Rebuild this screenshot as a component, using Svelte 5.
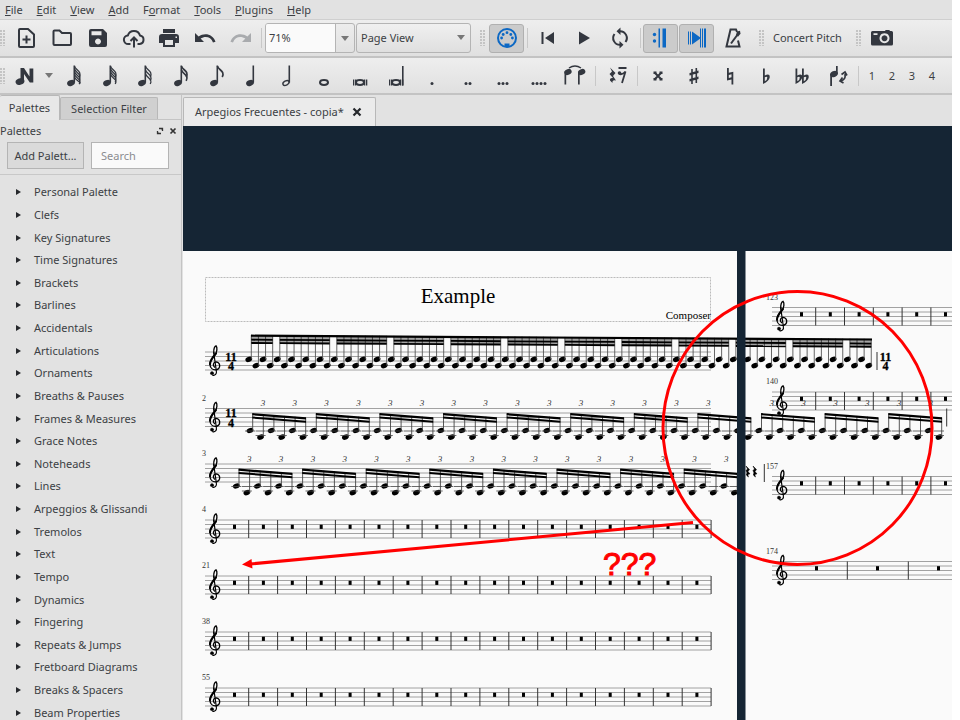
<script>
  const menus = ['File', 'Edit', 'View', 'Add', 'Format', 'Tools', 'Plugins', 'Help'];
  const accessKey = { Format: 1 };
  const palettes = [
    'Personal Palette', 'Clefs', 'Key Signatures', 'Time Signatures', 'Brackets', 'Barlines',
    'Accidentals', 'Articulations', 'Ornaments', 'Breaths & Pauses', 'Frames & Measures',
    'Grace Notes', 'Noteheads', 'Lines', 'Arpeggios & Glissandi', 'Tremolos', 'Text', 'Tempo',
    'Dynamics', 'Fingering', 'Repeats & Jumps', 'Fretboard Diagrams', 'Breaks & Spacers', 'Beam Properties'
  ];
  const fileTools = ['New', 'Open', 'Save', 'Save online', 'Print', 'Undo', 'Redo'];
  const durations = ['128th', '64th', '32nd', '16th', 'Eighth', 'Quarter', 'Half', 'Whole', 'Breve', 'Longa',
    'Dot', 'Double dot', 'Triple dot', 'Quadruple dot', 'Tie'];
  const accidentals = ['Double sharp', 'Sharp', 'Natural', 'Flat', 'Double flat', 'Flip'];
  const flagCount = [5, 4, 3, 2, 1];

  const range = (n) => Array.from({ length: n }, (_, i) => i);

  // Score geometry, in canvas units
  const gap = 4.5;
  const staves = [
    { n: '', x: 205, y: 352, end: 711 },
    { n: '2', x: 205, y: 408.5, end: 711 },
    { n: '3', x: 205, y: 464, end: 711 },
    { n: '4', x: 205, y: 520, end: 711, first: 248.7, step: 28.9, bars: 17 },
    { n: '21', x: 205, y: 576, end: 711, first: 248.7, step: 28.9, bars: 17 },
    { n: '38', x: 205, y: 632, end: 711, first: 248.7, step: 28.9, bars: 17 },
    { n: '55', x: 205, y: 688, end: 711, first: 248.7, step: 28.9, bars: 17 },
    { n: '123', x: 772, y: 307.5, end: 1200, first: 815.7, step: 28.8, bars: 13 },
    { n: '140', x: 772, y: 392, end: 1200, first: 815.7, step: 28.8, bars: 13 },
    { n: '157', x: 772, y: 476.5, end: 1200, first: 815.7, step: 28.8, bars: 13 },
    { n: '174', x: 772, y: 561.5, end: 1200, first: 847.3, step: 61, bars: 6 }
  ];
  const runPitch = 7.126;
  const runStem = (i) => 251.3 + runPitch * i;
  const runTop = (x) => 335 + (x - 251) * 0.0062;
  const runGroups = [[0, 3], ...range(10).map((k) => [4 + 8 * k, 11 + 8 * k]), [84, 87]];
  const beam = (x1, y1, x2, y2, t) => `M${x1} ${y1}L${x2} ${y2}V${y2 + t}L${x1} ${y1 + t}Z`;
  const tripletRows = [
    { x: 250, y: 408.5, groups: 11 },
    { x: 236.3, y: 464, groups: 8 }
  ];
  const step = 10.6;
</script>

{#snippet grip()}<span class="grip"></span>{/snippet}
{#snippet sep()}<span class="sep"></span>{/snippet}

<div class="app">
  <nav class="menubar">
    {#each menus as m}
      {@const k = accessKey[m] ?? 0}
      <button>{m.slice(0, k)}<u>{m[k]}</u>{m.slice(k + 1)}</button>
    {/each}
  </nav>

  <div class="toolbar">
    {@render grip()}
    <div class="group files">
      {#each fileTools as t, i}
        <button aria-label={t} class:dim={i === 6}>
          <svg width="24" height="24" viewBox="0 0 24 24">
            {#if i === 0}
              <path d="M5 4q0-1 1-1h8l6 5.500v11.500q0 1-1 1H6q-1 0-1-1zM12.500 9.500v8M8.500 13.500h8" class="line" />
            {:else if i === 1}
              <path d="M3.500 5.500q0-1 1-1h5l2.500 2.500h8q1 0 1 1v10q0 1-1 1h-15.500q-1 0-1-1z" class="line" />
            {:else if i === 2}
              <path fill-rule="evenodd" d="M5 3h12l4 4v12q0 2-2 2H5q-2 0-2-2V5q0-2 2-2zM5.500 5.300v4h10v-4zM12 12.500a3 3 0 1 0 .01 0z" />
            {:else if i === 3}
              <path d="M8.500 18H6.500a4.300 4.300 0 0 1-.6-8.600A6.300 6.300 0 0 1 18 9.500 4.300 4.300 0 0 1 17.700 18h-2.200M12 21.500V12M8.500 15l3.500-3.500 3.500 3.500" class="line" />
            {:else if i === 4}
              <path fill-rule="evenodd" d="M6 3h12v4H6zM5 8h14q3 0 3 3v6h-4v4H6v-4H2v-6q0-3 3-3zM8 14v5h8v-5zM18.500 10.500v1.500h1.500v-1.500z" />
            {:else if i === 5}
              <path d="M2 7v9h9l-3.400-3.400C12 9.500 18 10.500 20 16.500l2.500-.8C20 8 11.500 6 5.600 10.600z" />
            {:else}
              <path d="M22 7v9h-9l3.400-3.400C12 9.500 6 10.500 4 16.500l-2.500-.8C4 8 12.500 6 18.400 10.600z" />
            {/if}
          </svg>
        </button>
      {/each}
    </div>
    {@render sep()}
    <div class="zoom">
      <input aria-label="Zoom" value="71%" />
      <button aria-label="Zoom levels"><i class="caret"></i></button>
    </div>
    <div class="view">
      <select aria-label="View mode"><option>Page View</option></select>
      <i class="caret"></i>
    </div>
    <span class="grip inset"></span>
    <button class="toggle" aria-label="MIDI input" aria-pressed="true">
      <svg width="22" height="22" viewBox="0 0 22 22">
        <circle cx="11" cy="11" r="9" fill="none" stroke="#0c68c4" stroke-width="2" />
        <path d="M8.500 20v-3.500h5V20z" />
        <circle cx="5.600" cy="11" r="1.400" /><circle cx="16.400" cy="11" r="1.400" />
        <circle cx="7.200" cy="7.500" r="1.400" /><circle cx="14.800" cy="7.500" r="1.400" /><circle cx="11" cy="5.700" r="1.400" />
      </svg>
    </button>
    {@render sep()}
    <div class="group play">
      <button aria-label="Rewind"><svg width="24" height="24" viewBox="0 0 24 24"><path d="M5.500 6h2v12h-2zM18 6v12l-9-6z" /></svg></button>
      <button aria-label="Play"><svg width="24" height="24" viewBox="0 0 24 24"><path d="M7 5.500v13L18 12z" /></svg></button>
      <button aria-label="Loop">
        <svg width="24" height="24" viewBox="0 0 24 24">
          <path d="M12 5.200a6.800 6.800 0 0 1 5.500 10.800M12 18.800A6.800 6.800 0 0 1 6.500 8" class="line" />
          <path d="M12.500 1.500v7.500L8.500 5.200zM11.500 15v7.500l4-3.700z" />
        </svg>
      </button>
    </div>
    {@render sep()}
    <div class="pair">
      <button class="toggle" aria-label="Play repeats" aria-pressed="true">
        <svg width="22" height="22" viewBox="0 0 22 22"><circle cx="4.500" cy="7.500" r="1.700" /><circle cx="4.500" cy="14" r="1.700" /><path d="M8.500 1.500h1.500v19H8.500zM12.500 1.500h3.500v19h-3.500z" /></svg>
      </button>
      <button class="toggle" aria-label="Pan score" aria-pressed="true">
        <svg width="22" height="22" viewBox="0 0 22 22"><path d="M2 4.500h1v13H2zM4 4.500h1v13H4zM6 4.500l9 6.500-9 6.500zM14 1.500h1v19h-1zM16 1.500h1v19h-1zM18 1.500h2v19h-2z" /></svg>
      </button>
    </div>
    <button class="tool" aria-label="Metronome">
      <svg width="24" height="24" viewBox="0 0 24 24">
        <path d="M16 6l-1-2.500H9.500L5.500 20.500h13l-1.500-6" class="line" /><path d="M10 17.500L17 8" class="line" /><path d="M15 9l1-3.500 3-.8.5 3-2.500 3z" />
      </svg>
    </button>
    {@render grip()}
    <button class="pitch">Concert Pitch</button>
    {@render grip()}
    <button class="tool shot" aria-label="Image capture">
      <svg width="24" height="24" viewBox="0 0 24 24">
        <path fill-rule="evenodd" d="M2.500 5H15l.7-1h3.600l.7 1h1.500q1.500 0 1.500 1.500V18q0 1.500-1.500 1.500h-19Q1 19.500 1 18V6.500Q1 5 2.500 5zM14.500 7.200a5 5 0 1 0 .01 0zM14.500 9.200a3 3 0 1 1-.01 0zM3.500 7.300v1.700h4v-1.700z" />
      </svg>
    </button>
  </div>

  <div class="toolbar notes">
    {@render grip()}
    <button class="tool entry" aria-label="Note input">
      <svg width="20" height="20" viewBox="0 0 20 20"><ellipse cx="5" cy="15.500" rx="4.500" ry="3.300" transform="rotate(-20 5 15.500)" /><path d="M5.500 2h3.500l5.500 8.500V2.500h3.800v14h-3.500L9 8v7.500H5.500z" /></svg>
    </button>
    <button class="drop" aria-label="Input modes"><i class="caret"></i></button>
    <div class="group durations">
      {#each durations as d, i}
        <button aria-label={d}>
          <svg width="24" height="24" viewBox="0 0 24 24">
            {#if i < 7}
              {#if i === 6}
                <ellipse cx="9" cy="19" rx="3.300" ry="2.100" transform="rotate(-28 9 19)" fill="none" stroke="#33373f" stroke-width="1.400" />
              {:else}
                <ellipse cx="9" cy="19" rx="4" ry="2.900" transform="rotate(-22 9 19)" />
              {/if}
              <path d="M11.500 1.500h1.600v17h-1.600z" />
              {#if i < 5}
                {#each range(flagCount[i]) as f}
                  {@const y = 2 + f * (i < 2 ? 2.700 : 3.800)}
                  <path d="M12.500 {y}C13 {y + 4} 20.500 {y + 5} 17.200 {y + 11 > 20 ? 20 : y + 11}" fill="none" stroke="#33373f" stroke-width={i > 2 ? 1.7 : 1.3} />
                {/each}
              {/if}
            {:else if i < 10}
              <ellipse cx="12" cy="18.500" rx="4" ry="2.400" fill="none" stroke="#33373f" stroke-width="2" />
              {#if i > 7}<path d="M5 15.500h1.300v6H5zM7 15.500h1.300v6H7zM16 15.500h1.300v6H16zM18 15.500h1.300v6H18z" />{/if}
              {#if i === 9}<path d="M18 2h1.600v19.500h-1.600z" />{/if}
            {:else if i < 14}
              {#each range(i - 9) as k}
                <circle cx={12 + (k - (i - 10) / 2) * 4} cy="19.500" r="1.500" />
              {/each}
            {:else}
              <path d="M1.500 7v13.500h1.700V10zM15 7v13.500h1.700V10z" />
              <ellipse cx="5" cy="8" rx="3.800" ry="2.800" transform="rotate(-25 5 8)" /><ellipse cx="18.700" cy="8" rx="3.800" ry="2.800" transform="rotate(-25 18.700 8)" />
              <path d="M6 4q6-4 12 0" fill="none" stroke="#33373f" stroke-width="1.500" />
            {/if}
          </svg>
        </button>
      {/each}
    </div>
    {@render sep()}
    <button class="tool rest" aria-label="Rest">
      <svg width="24" height="24" viewBox="0 0 24 24">
        <path d="M5 3.500l5.500 5.500-2.500 3 3 4.500q-4-1-3.500 2.500L5 16.500q-.5-3 3-2.500L4.500 10l2.500-2.500z" />
        <path d="M13.500 3h8v2h-8z" /><circle cx="14.500" cy="9" r="1.800" /><path d="M14 10q4 1 6.500-2.500L17 19" fill="none" stroke="#33373f" stroke-width="1.800" />
      </svg>
    </button>
    {@render sep()}
    <div class="group accs">
      {#each accidentals as a, i}
        <button aria-label={a}>
          <svg width="24" height="24" viewBox="0 0 24 24">
            {#if i === 0}
              <path d="M8.500 8.500l7 7M15.500 8.500l-7 7" class="line" /><path d="M7.500 7.500h3v2.500h-3zM13.500 7.500h3v2.500h-3zM7.500 14h3v2.500h-3zM13.500 14h3v2.500h-3z" />
            {:else if i === 1}
              <path d="M9.200 5h1.600v15H9.200zM13.500 4h1.600v15h-1.600zM7.500 9l9-2.500V9l-9 2.500zM7.500 15l9-2.500V15l-9 2.500z" />
            {:else if i === 2}
              <path fill-rule="evenodd" d="M9 4h1.800v4.800l4.500-1v12.700h-1.800v-5L9 16.500zM10.800 11v3l2.700-.7v-3z" />
            {:else if i === 3}
              <path fill-rule="evenodd" d="M9 4.500h1.800v7q5-2.500 5 1.500-.5 4-6.800 7zM10.800 13.200v4q2.700-1.500 2.500-3.700-.3-1.300-2.500-.3z" />
            {:else if i === 4}
              {#each [5.5, 12] as x}
                <path transform="translate({x - 9} 0)" fill-rule="evenodd" d="M9 4.500h1.800v7q5-2.500 5 1.500-.5 4-6.800 7zM10.800 13.200v4q2.700-1.500 2.500-3.700-.3-1.300-2.500-.3z" />
              {/each}
            {:else}
              <ellipse cx="8" cy="10" rx="4" ry="3" transform="rotate(-25 8 10)" /><path d="M4.200 10H6v12H4.200zM10 2h1.700v8H10z" />
              <path d="M14.500 17q5.500-1 4.500-7M16.500 13.500L14 17l3.500 2M15.500 10.500l3.500-2.500 2 3.500" fill="none" stroke="#33373f" stroke-width="1.700" />
            {/if}
          </svg>
        </button>
      {/each}
    </div>
    {@render sep()}
    <div class="voices">
      {#each [1, 2, 3, 4] as v}<button>{v}</button>{/each}
    </div>
  </div>

  <div class="body">
    <aside>
      <div class="sidetabs">
        <button class="on">Palettes</button>
        <button>Selection Filter</button>
      </div>
      <header>
        <span>Palettes</span>
        <button aria-label="Float"><svg width="8" height="8" viewBox="0 0 8 8"><path d="M3 1.500H6.500V4M5 6.500H1.500V4M6.500 1.500L5.500 2.500M1.500 6.500l1-1" fill="none" stroke="#333" stroke-width="1.300" /></svg></button>
        <button aria-label="Close palettes"><svg width="8" height="8" viewBox="0 0 8 8"><path d="M1.500 1.500l5 5M6.500 1.500l-5 5" fill="none" stroke="#333" stroke-width="1.700" /></svg></button>
      </header>
      <div class="search">
        <button>Add Palett...</button>
        <input placeholder="Search" aria-label="Search palettes" />
      </div>
      <ul>
        {#each palettes as p}
          <li><button><i></i>{p}</button></li>
        {/each}
      </ul>
    </aside>

    <main>
      <div class="doctabs">
        <div class="doctab">
          <span>Arpegios Frecuentes - copia*</span>
          <button aria-label="Close score"><svg width="10" height="10" viewBox="0 0 10 10"><path d="M1.500 1.500l7 7M8.500 1.500l-7 7" fill="none" stroke="#26282c" stroke-width="2.200" /></svg></button>
        </div>
      </div>
      <div class="canvas">
        <svg class="score" width="1017" height="594" viewBox="183 126 1017 594">
          <defs>
            <g id="clef">
              <g transform="scale(.3333)" fill="none" stroke="#000" stroke-linecap="round">
                <path d="M15 24C12 10 18 2 21 1C26 6 24 20 18 28C10 38 3 45 3 56C3 67 11 73 19 73C28 73 33 67 32 59C31 52 24 48 19 50C12 52 11 60 17 65" stroke-width="4" />
                <path d="M21 24C10 36 3 45 3 56" stroke-width="6" />
                <path d="M14 20L22 76C24 85 18 91 11 89" stroke-width="3.500" />
                <circle cx="9" cy="83" r="5" fill="#000" />
              </g>
            </g>
            <ellipse id="head" rx="3.500" ry="2.500" transform="rotate(-22)" />
          </defs>

          <rect x="183" y="251" width="554" height="600" fill="#fafafa" />
          <rect x="745" y="251" width="554" height="600" fill="#fafafa" />

          <rect x="205.500" y="277.500" width="505" height="44" fill="none" stroke="#bbb" stroke-dasharray="2 1" />
          <text x="458" y="303" font-size="21" text-anchor="middle">Example</text>
          <text x="711" y="319" font-size="11" text-anchor="end">Composer</text>

          {#each staves as s}
            {#each range(5) as l}
              <path d="M{s.x} {s.y + l * gap}H{s.end}" stroke="#8c8c8c" stroke-width=".8" />
            {/each}
            <use href="#clef" x={s.x + 4} y={s.y - 6.5} />
            <text x={s.x - (s.x > 700 ? 6 : 3)} y={s.y - 8} font-size="8" fill="#333">{s.n}</text>
            {#each range(s.bars ?? 0) as b}
              {@const x = s.first + b * s.step}
              <path d="M{x} {s.y}v18" stroke="#333" stroke-width="1" />
              <rect x={x - (s.step > 40 ? 32.3 : 15.7)} y={s.y + 4.700} width="3" height="4.200" />
            {/each}
          {/each}

          {#each [[231, 352], [231, 408.5], [885.5, 352]] as [x, y]}
            <g font-size="12" font-weight="700" text-anchor="middle" stroke="#000" stroke-width=".3">
              <text {x} y={y + 8.500}>11</text>
              <text {x} y={y + 18}>4</text>
            </g>
          {/each}

          {#each range(88) as i}
            {@const x = runStem(i)}
            {@const y = i % 2 ? 365.6 : 359.4}
            <use href="#head" x={x - 2.500} {y} />
            <path d="M{x} {y}V{runTop(x)}" stroke="#555" stroke-width=".9" />
          {/each}
          <path d={beam(251, 334.6, 872, 338.4, 2.2)} />
          {#each runGroups as [a, b]}
            {@const x1 = runStem(a)}
            {@const x2 = runStem(b)}
            <path d={beam(x1, runTop(x1), x2, runTop(x2), 8)} fill="#000" opacity=".35" />
            <path d={beam(x1, runTop(x1) + 3.8, x2, runTop(x2) + 3.8, 1.8)} />
            <path d={beam(x1, runTop(x1) + 7, x2, runTop(x2) + 7, 1.9)} />
          {/each}

          {#each tripletRows as r}
            {#each range(r.groups) as g}
              {@const x0 = r.x + g * 6 * step}
              {#each range(6) as k}
                {@const x = x0 + k * step}
                {@const y = r.y + (k % 2 ? 28.600 : 22)}
                <use href="#head" {x} {y} />
                <path d="M{x + 2.700} {y}V{r.y + 5 + k * 0.8}" stroke="#444" stroke-width=".9" />
                <path d="M{x - 5} {r.y + 22.500}h10" stroke="#444" stroke-width=".8" />
                {#if k % 2}<path d="M{x - 5} {r.y + 27}h10" stroke="#444" stroke-width=".8" />{/if}
              {/each}
              <path d={beam(x0 + 2.3, r.y + 4.6, x0 + 56, r.y + 8.8, 2.2)} />
              <path d={beam(x0 + 2.3, r.y + 8, x0 + 56, r.y + 12.2, 2)} />
              <text x={x0 + 13} y={r.y - 2.500} class="tuplet">3</text>
              <text x={x0 + 44.800} y={r.y - 2.500} class="tuplet">3</text>
            {/each}
          {/each}

          <path d="M877 352v18M946.700 408.500v18M764.300 464v18" stroke="#333" />
          {#each [746, 753] as x}
            <path d="M{x} 466l3.500 3.500-1.500 2 2 2.500q-3-.5-1.500 3-3.500-2-1.500-4L{x} 470.500l1.500-1.500z" stroke="#000" stroke-width=".5" />
          {/each}

          <rect x="737" y="251" width="8.500" height="600" fill="#152534" />

          <ellipse cx="797.500" cy="428" rx="134.500" ry="136.500" fill="none" stroke="#f00" stroke-width="3" />
          <path d="M693 522.500L250 564" stroke="#f00" stroke-width="3" />
          <path d="M242 564.500l9.500-5.500 1 9.500z" fill="#f00" />
          <text x="603" y="575" class="marks">???</text>
        </svg>
      </div>
    </main>
  </div>
</div>

<style>
  :global(body) { margin: 0; background: #fff; }
  .app {
    display: flex; flex-direction: column; box-sizing: border-box; height: 100vh; padding-right: 8px;
    overflow: hidden; font: 11px/16px "Noto Sans", "Open Sans", sans-serif; color: #3c3f44;
  }
  button, input, select { font: inherit; color: inherit; margin: 0; }
  button { background: none; border: 0; padding: 0; white-space: nowrap; }
  button svg { display: block; margin: auto; fill: #33373f; }
  .line { fill: none; stroke: #33373f; stroke-width: 2; }

  .menubar { display: flex; gap: 14px; height: 20px; padding: 1px 5px 0; background: #e2e2e2; border-bottom: 1px solid #cfcfcf; box-sizing: border-box; }
  .toolbar {
    display: flex; align-items: center; box-sizing: border-box; height: 38px; flex: none;
    background: linear-gradient(#eee, #e0e0e0); border-bottom: 2px solid #c3c3c3;
  }
  .notes { height: 37px; }
  .grip { width: 5px; height: 16px; margin-right: 3px; flex: none; background: radial-gradient(circle at 1px 1px, #c4c4c4 1px, transparent 1px) 0 0 / 3px 3px; }
  .inset { margin: 0 4px 0 9px; }
  .sep { width: 1px; height: 20px; background: #c8c8c8; margin: 0 2px; flex: none; }
  .group { display: flex; }
  .group button { flex: 1; }
  .dim svg { fill: #a9abae; }
  .files { width: 251px; }
  .play { width: 108px; }
  .durations { width: 537px; }
  .accs { width: 216px; }
  .caret { border: 4px solid transparent; border-top: 5px solid #777; border-bottom: 0; display: block; width: 0; margin: auto; }
  .zoom { display: flex; box-sizing: border-box; width: 90px; height: 30px; margin-left: 1px; border: 1px solid #b4b4b4; border-radius: 3px; overflow: hidden; }
  .zoom input { flex: 1; min-width: 0; border: 0; background: #fafafa; padding: 0 3px; }
  .zoom button { width: 19px; border-left: 1px solid #b4b4b4; }
  .view { position: relative; width: 115px; height: 30px; margin-left: 1px; }
  .view select { appearance: none; box-sizing: border-box; width: 100%; height: 100%; padding: 0 4px; background: linear-gradient(#f0f0f0, #dfdfdf); border: 1px solid #b4b4b4; border-radius: 3px; }
  .view .caret { position: absolute; right: 6px; top: 12px; }
  .toggle { width: 35px; height: 29px; box-sizing: border-box; background: #cbcbcb; border: 1px solid #b0b0b0; border-radius: 3px; margin-right: 1px; }
  .toggle svg { fill: #0c68c4; }
  .pair { display: flex; }
  .tool { width: 36px; }
  .tool + .grip { margin: 0 9px 0 8px; }
  .pitch { margin-right: 14px; }
  .entry { width: 34px; }
  .drop { width: 14px; }
  .rest { width: 37px; }
  .voices { display: flex; margin-left: 1px; }
  .voices button { width: 20px; }

  .body { flex: 1; display: flex; min-height: 0; background: #e2e2e2; }
  aside { width: 181px; flex: none; overflow: hidden; border-right: 1px solid #c4c4c4; }
  .sidetabs { display: flex; align-items: flex-end; height: 24px; border-bottom: 1px solid #c4c4c4; }
  .sidetabs button { height: 22px; padding: 0 10px; background: #d0d0d0; border: 1px solid #b8b8b8; border-bottom: 0; border-radius: 2px 2px 0 0; box-sizing: border-box; width: 98px; }
  .sidetabs .on { height: 25px; width: 60px; padding: 0 6px; margin-bottom: -1px; border-left: 0; background: #e8e8e8; }
  header { display: flex; align-items: center; gap: 5px; height: 22px; padding-right: 4px; }
  header span { flex: 1; }
  .search { display: flex; gap: 7px; padding: 0 12px 5px 7px; border-bottom: 1px solid #c8c8c8; }
  .search button, .search input { height: 27px; width: 77px; box-sizing: border-box; border: 1px solid #b4b4b4; }
  .search button { background: #dadada; }
  .search input { background: #fafafa; width: 78px; padding: 0 9px; }
  ::placeholder { color: #8a8c90; opacity: 1; }
  ul { list-style: none; margin: 6px 0 0; padding: 0; display: grid; grid-auto-rows: 1fr; height: 543px; }
  li { display: flex; align-items: center; }
  li button { display: flex; align-items: center; padding-left: 16px; }
  li i { border: 3px solid transparent; border-left: 5px solid #26282c; border-right: 0; margin-right: 13px; }

  main { flex: 1; min-width: 0; display: flex; flex-direction: column; padding-left: 1px; }
  .doctabs { height: 31px; display: flex; align-items: flex-end; flex: none; }
  .doctab { display: flex; align-items: center; gap: 8px; box-sizing: border-box; height: 29px; width: 193px; padding: 0 11px; background: #ebebeb; border: 1px solid #b8b8b8; border-bottom: 0; border-radius: 2px 2px 0 0; white-space: nowrap; }
  .canvas { flex: 1; min-height: 0; overflow: hidden; background: #152534; }
  .score { display: block; font-family: "Liberation Serif", serif; }
  .tuplet { font-size: 9px; font-style: italic; fill: #333; text-anchor: middle; }
  .marks { font: 32px "Liberation Sans", sans-serif; fill: #f00; stroke: #f00; stroke-width: 1; }
</style>
